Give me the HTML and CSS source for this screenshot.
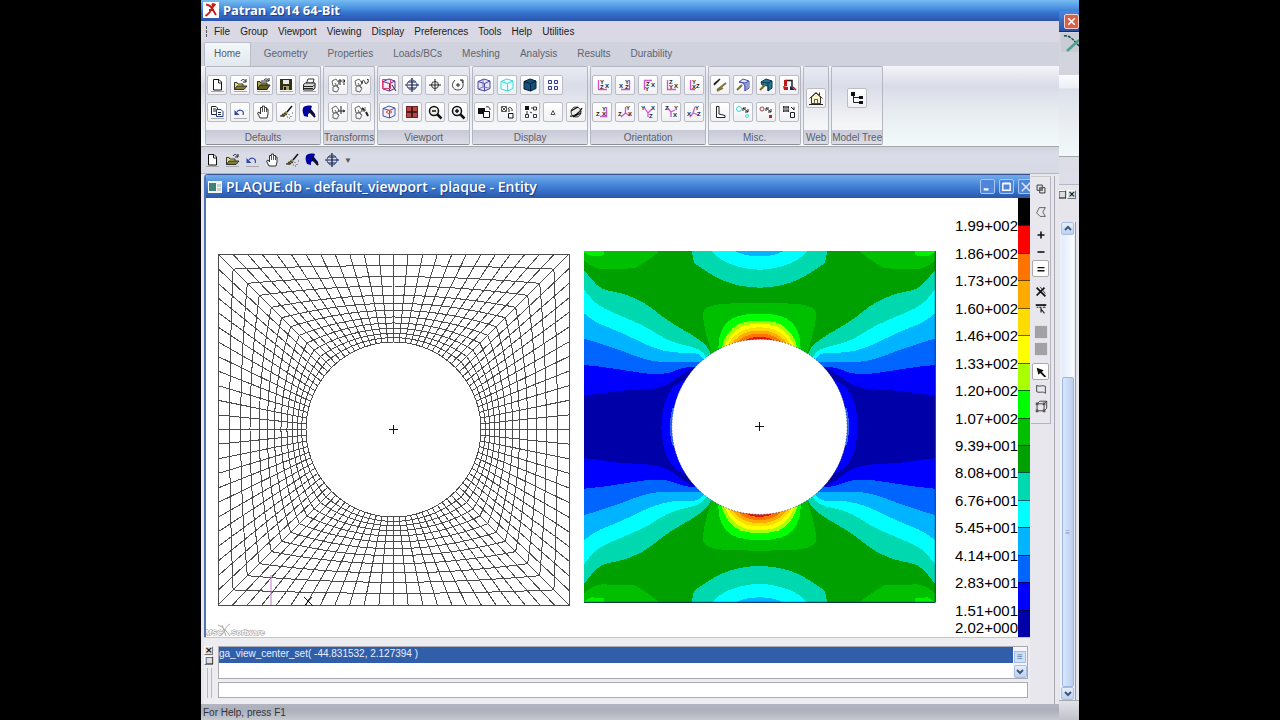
FILE: index.html
```
<!DOCTYPE html>
<html lang="en">
<head>
<meta charset="utf-8">
<title>Patran 2014 64-Bit</title>
<link rel="stylesheet" href="styles.css">
</head>
<body>
<div class="desktop">
  <div class="app">
    <header class="titlebar">
      <svg class="app-logo" viewBox="0 0 16 16" aria-hidden="true"><rect width="16" height="16" fill="#fff"/><path d="M3 2.500C6 3 9 5 10 8L13 13M12.500 2C10 4 9 6 8 8C7 11 5 12 2.500 14M6 8h5" fill="none" stroke="#c81818" stroke-width="1.800"/><circle cx="10" cy="2.500" r="1.500" fill="#c81818"/></svg>
      <h1>Patran 2014 64-Bit</h1>
    </header>
    <nav class="menubar" aria-label="Menu">
      <button>File</button><button>Group</button><button>Viewport</button><button>Viewing</button><button>Display</button><button>Preferences</button><button>Tools</button><button>Help</button><button>Utilities</button>
    </nav>
    <nav class="tabs" aria-label="Ribbon tabs">
      <button class="active">Home</button><button>Geometry</button><button>Properties</button><button>Loads/BCs</button><button>Meshing</button><button>Analysis</button><button>Results</button><button>Durability</button>
    </nav>
    <div class="ribbon" id="ribbon"></div>
    <div class="quick" id="quick"></div>
    <div class="work">
      <div class="left">
        <section class="doc">
          <div class="doc-title">
            <svg class="doc-icon" viewBox="0 0 14 12" aria-hidden="true"><rect width="14" height="12" fill="#f4f4f0"/><rect x="1" y="2" width="7" height="8" fill="#3f8478"/><path d="M9 3h4v3H9zM9 7h4v3H9z" fill="#c8d0d0"/></svg>
            <h2>PLAQUE.db - default_viewport - plaque - Entity</h2>
            <button class="win-btn" aria-label="Minimize"><svg viewBox="0 0 14 14"><path d="M3 10h5" stroke="#fff" stroke-width="2.500"/></svg></button>
            <button class="win-btn" aria-label="Maximize"><svg viewBox="0 0 14 14"><path d="M3 4h8v7H3zM3 3.500h8" fill="none" stroke="#fff" stroke-width="1.500"/></svg></button>
            <button class="win-btn cut" aria-label="Close"><svg viewBox="0 0 14 14"><path d="M3 3l9 9M12 3l-9 9" stroke="#dfe8fa" stroke-width="1.500"/></svg></button>
          </div>
          <div class="canvas">
            <svg class="plots" viewBox="206 198 740 439" preserveAspectRatio="xMinYMin meet">
              <defs>
                <g id="quarter">
                  <path fill="#00a000" d="M27 33H555V562H27Z"/>
                  <path fill="#00be00" d="M27 33H252C236 52 202 70 180 85L100 87C75 93 48 80 27 62Z"/>
                  <path fill="#00f000" d="M27 33H88V46L50 49L27 37Z"/>
                  <path fill="#00d8b0" d="M27 90C48 115 58 132 80 145C110 157 130 155 160 167C195 180 215 192 240 212C265 235 310 262 350 284C382 304 402 320 408 342L420 562H27Z"/>
                  <path fill="#00ffff" d="M27 148C45 170 55 188 85 204C130 226 185 245 225 268C265 295 290 308 330 316C360 322 385 330 394 352L420 562H27Z"/>
                  <path fill="#00b4ff" d="M27 220C50 238 65 250 100 262C145 280 180 298 215 314C250 330 290 340 330 338C360 336 375 340 386 358L420 562H27Z"/>
                  <path fill="#0064ff" d="M27 296C70 307 100 320 145 334C185 350 215 362 260 366C310 368 340 362 379 366L400 562H27Z"/>
                  <path fill="#0000ff" d="M27 375C90 380 140 390 195 398C235 404 275 404 300 392C320 384 340 378 365 380L400 562H27Z"/>
                  <path fill="#0000a8" d="M27 466C70 464 90 457 130 453C180 449 225 450 255 442C290 432 305 412 325 400C340 390 350 382 366 380L400 562H27Z"/>
                  <path fill="#0000ff" d="M259 562C260 515 268 475 288 450C303 430 320 424 334 418L400 562Z"/>
                  <path fill="#2866ff" d="M285 562C285 535 288 515 294 500L320 562Z"/>
                  <path fill="#00d8b0" d="M350 33C354 50 354 66 362 73C395 92 410 107 440 120C475 135 515 143 555 143V33Z"/>
                  <path fill="#00ffff" d="M411 33C425 50 440 62 468 73C500 84 525 89 555 89V33Z"/>
                  <path fill="#00b4ff" d="M480 33C500 44 525 49 555 49V33Z"/>
                  <path fill="#00be00" d="M412 345C400 305 384 260 384 225C384 198 415 192 480 190L555 189V330Z"/>
                  <path fill="#00ff00" d="M430 325C430 285 442 252 472 235C498 223 528 221 555 221V330Z"/>
                  <path fill="#aaff00" d="M440 322C448 288 468 262 497 249C516 243 536 242 555 242V330Z"/>
                  <path fill="#ffff00" d="M448 320C460 290 480 268 506 257C522 252 540 251 555 251V330Z"/>
                  <path fill="#ffdc00" d="M456 318C470 293 490 275 514 267C528 263 542 262 555 262V330Z"/>
                  <path fill="#ffaa00" d="M468 314C482 294 500 281 522 275C534 272 545 272 555 272V330Z"/>
                  <path fill="#ff7300" d="M486 308C500 293 515 286 530 283C540 281 548 281 555 281V330Z"/>
                  <path fill="#f01000" d="M508 303C520 295 532 291 555 290V330Z"/>
                </g>
              </defs>
              <g id="mesh" class="mesh"></g>
              <path class="axis" d="M271 575V605"/>
              <path class="cross" d="M389 429.500h9M393.500 425v9M304 597l9 9M312 597l-7 8"/>
              <g transform="translate(575 240) scale(.33333)">
                <g class="bands">
                  <use href="#quarter"/>
                  <use href="#quarter" transform="matrix(-1 0 0 1 1107 0)"/>
                  <use href="#quarter" transform="matrix(1 0 0 -1 0 1121)"/>
                  <use href="#quarter" transform="matrix(-1 0 0 -1 1107 1121)"/>
                </g>
                <circle cx="553.500" cy="560.500" r="263" fill="#fff"/>
                <circle cx="553.500" cy="560.500" r="263" class="rim"/>
                <path d="M1081 33V1087H27" fill="none" stroke="#102058" stroke-width="3"/>
              </g>
              <path class="cross" d="M755 426.500h9M759.500 422v9"/>
              <text class="msc" x="205" y="635">MSC</text>
              <text class="msc" x="231" y="635">Software</text>
              <path class="msc-x" d="M218 625c6 2 8 6 12 11M230 624c-6 3-4 9-11 12M222 625l4 11"/>
            </svg>
            <ol class="legend" id="legend"></ol>
          </div>
        </section>
        <section class="console">
          <div class="grip"><button aria-label="Close panel">×</button><button aria-label="Float panel">□</button><i></i></div>
          <div class="console-main">
            <div class="history">
              <ul><li>ga_view_center_set( -44.831532, 2.127394 )</li></ul>
              <div class="mini-scroll"><button class="thumb" aria-label="Scroll position">≡</button><button class="scroll-btn" aria-label="Scroll down"><svg viewBox="0 0 10 10"><path d="M2 3l3 3 3-3" fill="none" stroke="#405878" stroke-width="2"/></svg></button></div>
            </div>
            <input class="command" type="text" aria-label="Command">
          </div>
        </section>
      </div>
      <aside class="side"><div class="picker" id="picker"></div></aside>
    </div>
    <footer class="status">For Help, press F1</footer>
  </div>
  <div class="back">
    <div class="back-title"><button aria-label="Close"><svg viewBox="0 0 16 16"><path d="M4 4l8 8M12 4l-8 8" stroke="#fff" stroke-width="2"/></svg></button></div>
    <div class="back-menu"><svg viewBox="0 0 18 21"><rect width="18" height="19" fill="#c9ccd2"/><path d="M3 3C8 2 12 6 18 13" fill="none" stroke="#204858" stroke-width="1.500" stroke-dasharray="3 1"/><path d="M6 18L18 7" stroke="#48a090" stroke-width="2.500"/></svg></div>
    <div class="back-ribbon"></div>
    <div class="back-gap"></div>
    <div class="back-dock"><button aria-label="Float">□</button><button aria-label="Close panel">×</button></div>
    <div class="back-scroll">
      <button class="scroll-btn" aria-label="Scroll up"><svg viewBox="0 0 10 10"><path d="M2 6l3-3 3 3" fill="none" stroke="#405878" stroke-width="2"/></svg></button>
      <div class="track"><div class="handle">≡</div></div>
      <button class="scroll-btn" aria-label="Scroll down"><svg viewBox="0 0 10 10"><path d="M2 3l3 3 3-3" fill="none" stroke="#405878" stroke-width="2"/></svg></button>
    </div>
    <div class="back-status"></div>
  </div>
</div>
<script src="app.js"></script>
</body>
</html>
```

FILE: styles.css
```
* { box-sizing: border-box; }
body { margin: 0; background: #000; font-family: "Liberation Sans", sans-serif; font-size: 10px; color: #222; }
button { font: inherit; color: inherit; border: 0; padding: 0; margin: 0; background: none; }
h1, h2, ul, ol { margin: 0; padding: 0; list-style: none; }
svg { display: block; }
.desktop { position: relative; max-width: 878px; min-height: 100vh; margin: 0 auto; display: flex; }
.app { flex: 1; min-width: 0; display: flex; flex-direction: column; background: #d5d7e1; }

.titlebar { height: 21px; display: flex; align-items: center; gap: 4px; padding: 0 0 2px 2px; background: linear-gradient(#76bcf2, #4a90e0 40%, #3574cf 60%, #2c53ad); }
.app-logo { width: 16px; height: 16px; }
.titlebar h1, .doc-title h2 { font: bold 13px "Noto Sans", sans-serif; color: #fff; text-shadow: 1px 1px 1px #1c3c88; white-space: nowrap; }
.menubar { height: 21px; display: flex; align-items: center; gap: 10px; padding: 0 0 1px 13px; background: #d9d8e4; position: relative; color: #1c1c24; }
.menubar::before { content: ""; position: absolute; left: 5px; top: 5px; height: 11px; border-left: 1px dashed #555; }
.tabs { height: 24px; display: flex; padding-left: 3px; padding-right: 20px; background: #d0d2de; color: #60646f; }
.tabs button { padding: 0 10px 2px; }
.tabs .active { padding: 0 9px 2px; margin: 0 3px 0 0; background: linear-gradient(#f3f7fa, #e1e9ef); border: 1px solid #b9bdca; border-bottom: 0; border-radius: 2px 2px 0 0; color: #555a66; }

.ribbon { height: 81px; display: flex; gap: 2px; margin-right: 20px; padding: 0 4px; background: linear-gradient(#f4f5fa, #d9dce7 25%, #e6ebf0 55%, #f2fafa); border-bottom: 1px solid #a5a6ac; }
.group { display: flex; flex-direction: column; border: 1px solid #b3b6c0; border-bottom-color: #8e9099; border-radius: 2px; background: linear-gradient(#e9ebf2, #d9dde8 25%, #e7e9ef 50%, #f4f6f8 75%); margin-bottom: 1px; }
.tools { flex: 1; display: grid; gap: 7px 3px; padding: 0 1px 1px; place-content: center; }
.c5 { grid-template-columns: repeat(5, 20px); }
.c4 { grid-template-columns: repeat(4, 20px); }
.c2 { grid-template-columns: repeat(2, 20px); }
.c1 { grid-template-columns: 20px; padding: 0 2px 1px; }
.tools button { width: 20px; height: 20px; display: grid; place-items: center; border: 1px solid #bcbdc4; border-radius: 2px; background: linear-gradient(#fff, #f1f1f4); }
.icon { width: 16px; height: 16px; }
.group h3 { margin: 0; height: 14px; font-size: 10px; line-height: 16px; font-weight: normal; text-align: center; white-space: nowrap; color: #5c606c; background: linear-gradient(#c7c9d7, #dcdde5); }

.quick { height: 27px; display: flex; gap: 4px; align-items: center; padding-left: 3px; background: linear-gradient(#d0d2dc, #dadde8 30%, #d6dae5); border-bottom: 1px solid #b4b6c0; }
.quick .caret { align-self: center; color: #555; font-size: 8px; }

.work { flex: 1; display: flex; margin-right: 20px; min-height: 0; background: #e9e7ee; }
.left { flex: 1; min-width: 0; display: flex; flex-direction: column; padding-left: 3px; }
.doc { flex: 1; display: flex; flex-direction: column; border-left: 2px solid #5272b4; border-top: 1px solid #34508c; border-radius: 4px 0 0 0; overflow: hidden; background: #fff; }
.doc-title { height: 23px; display: flex; align-items: center; background: linear-gradient(#74abec, #4485d8 45%, #3067bf 80%, #2f56a4); padding-left: 2px; }
.doc-icon { width: 14px; height: 12px; margin-right: 4px; }
.doc-title h2 { flex: 1; font: 600 14px "Open Sans", sans-serif; line-height: 20px; }
.win-btn { width: 15px; height: 15px; margin-left: 4px; border: 1px solid #aac6f3; border-radius: 2px; background: #4f86dc; }
.win-btn.cut { width: 12px; border-right: 0; border-radius: 2px 0 0 2px; overflow: hidden; }
.win-btn svg { width: 13px; height: 13px; }
.canvas { flex: 1; display: flex; justify-content: space-between; }
.plots { width: 740px; height: 439px; flex: 0 0 auto; }
.mesh { fill: none; stroke: #4c4c4c; stroke-width: 1px; shape-rendering: crispEdges; }
.bands { shape-rendering: crispEdges; }
.cross { fill: none; stroke: #111; }
.axis { stroke: #c878d8; }
.rim { fill: none; stroke: #203060; stroke-width: 2px; stroke-dasharray: 4 5; }
.msc { font: italic bold 8px "Liberation Sans", sans-serif; fill: #fff; stroke: #999; stroke-width: 1px; paint-order: stroke; }
.msc-x { fill: none; stroke: #aaa; }
.legend { display: flex; flex-direction: column; height: 439px; font: 15px "Liberation Sans", sans-serif; color: #000; }
.legend li { flex: 1; display: flex; align-items: flex-end; justify-content: flex-end; }
.legend span { line-height: 16px; margin-bottom: -9px; }
.legend li:last-child span { margin-bottom: 1px; }
.legend i { align-self: stretch; width: 12px; border-top: 1px solid rgba(0, 0, 0, .6); }

.console { height: 67px; display: flex; gap: 5px; padding: 8px 2px 6px 0; background: #ececf1; border-top: 1px solid #c4c4cc; }
.grip { width: 9px; display: flex; flex-direction: column; gap: 1px; }
.grip button, .back-dock button { width: 9px; height: 9px; font: bold 9px "DejaVu Sans", sans-serif; line-height: 7px; border: 1px solid #888; border-color: #fff #777 #777 #fff; background: #ddd; color: #111; }
.grip i { flex: 1; width: 5px; margin: 2px 0 0 3px; border: 1px solid #b8b8c0; border-width: 0 1px; }
.console-main { flex: 1; display: flex; flex-direction: column; gap: 3px; }
.history { height: 34px; display: flex; background: #fff; border: 1px solid #a9a9b2; }
.history ul { flex: 1; }
.history li { height: 16px; line-height: 14px; background: #315ea8; color: #e8f0ff; font-size: 10px; }
.mini-scroll { width: 14px; display: flex; flex-direction: column; justify-content: space-between; align-items: center; background: #f3f5fa; padding-top: 4px; }
.thumb { width: 12px; height: 12px; line-height: 10px; border: 1px solid #a5bde6; background: #cfdffa; color: #6680a8; }
.scroll-btn { width: 13px; height: 13px; border: 1px solid #a9bfe2; border-radius: 2px; background: linear-gradient(#e6effd, #bcd0f2); display: grid; place-items: center; }
.scroll-btn svg { width: 10px; height: 10px; }
.command { height: 16px; width: 100%; border: 1px solid #a9a9b2; padding: 0 2px; background: #fff; font: 10px "Liberation Sans", sans-serif; }

.side { width: 29px; padding: 2px 4px 0 1px; background: #e9e7ee; display: flex; align-items: flex-start; gap: 3px; }
.side::after { content: ""; align-self: stretch; border-left: 1px solid #aaaab4; }
.picker { width: 20px; height: 248px; display: flex; flex-direction: column; align-items: center; padding-top: 3px; border: 1px solid #b4b4be; border-top-color: #ccc; border-left: 0; }
.picker button { width: 17px; height: 17px; display: grid; place-items: center; }
.picker .gap { margin-bottom: 6px; }
.picker .on { background: #fff; border: 1px solid #aaa; border-radius: 2px; }
.picker .icon { width: 14px; height: 14px; }

.status { height: 16px; line-height: 17px; padding-left: 2px; color: #30343c; background: linear-gradient(#b2b5c0, #acb0bb 40%, #c6c9d0); }

.back { position: absolute; right: 0; top: 11px; bottom: 0; width: 20px; display: flex; flex-direction: column; background: #e6e5ec; overflow: hidden; }
.back-title { height: 21px; background: linear-gradient(#4a86dc, #2a50a8); padding: 3px 0 0 5px; border-bottom: 1px solid #15306e; }
.back-title button { width: 15px; height: 15px; border: 1px solid #f2d0c8; border-radius: 2px; background: #d4624a; }
.back-menu { height: 43px; background: #d3d5de; padding: 1px 0 0 2px; }
.back-menu svg { width: 18px; height: 21px; }
.back-ribbon { height: 82px; background: linear-gradient(#fbfcfe, #eceff5 16%, #dce0ea 17%, #e8ecf1 55%, #f2f9fa); border-bottom: 1px solid #a5a6ac; }
.back-gap { height: 28px; background: linear-gradient(#dcdde4, #dcdeea); border-bottom: 1px solid #b4b6c0; }
.back-dock { height: 37px; padding-top: 5px; display: flex; justify-content: flex-end; gap: 1px; padding-right: 3px; }
.back-scroll { flex: 1; margin: 0 3px 0 1px; border-right: 1px solid #8f98ac; display: flex; flex-direction: column; align-items: center; background: #edf1fa; }
.track { flex: 1; width: 12px; display: flex; flex-direction: column; background: linear-gradient(90deg, #e4ecfa, #fafcff); }
.handle { margin-top: 142px; flex: 1; display: grid; place-items: center; border: 1px solid #9cb6e0; border-radius: 2px; background: linear-gradient(90deg, #dae7fd, #bccff0); color: #8098c0; font-size: 8px; }
.back-status { height: 20px; border-top: 1px solid #aaa; background: linear-gradient(#e2e3e8, #c0c3cb); }
```

FILE: app.js
```
const SVG_NS = 'http://www.w3.org/2000/svg';

const line = (d, color = '#222', width = 1) =>
  `<path d="${d}" fill="none" stroke="${color}" stroke-width="${width}"/>`;
const fill = (d, color = '#111') => `<path d="${d}" fill="${color}"/>`;
const base = line('M2 14.500h13', '#aaa');
const cube = (edge, face) =>
  `<path d="M2 4.500L8 2l6 2v7.500L8.500 14 2 12Z" fill="${face}" stroke="${edge}"/>` + line('M2 4.500L8.500 6.500 14 4M8.500 6.500V14', edge);
const small = (x, y, letter) => `<text x="${x}" y="${y}" font-family="Liberation Sans" font-size="6" font-weight="bold" fill="#222">${letter}</text>`;
const gears = line('M2 4l4-2 3 4-2 3-4 0zM3 10l3-2 3 3-2 4-4-1zM5 6l3 5', '#666');
const scissors = fill('M2 4C3 2 6 1 11 2L10 5 14 10 14 13 9 9 7 10 7 13 3 12C2 9 1 7 2 4Z', '#0000a0') + line('M8 6l6 7', '#111', 2);
const axes = (d, a, b, c) => line(d, '#cc55cc', 1.300) + small(a[0], a[1], a[2]) + small(b[0], b[1], b[2]) + small(c[0], c[1], c[2]);

const icons = {
  new: `<path d="M4.500 2.500H10L12.500 5V13H4.500Z" fill="#fff" stroke="#111"/>` + line('M9.500 3v3h3') + base,
  open: `<path d="M2.500 12.500V5.500H5L6 7H11V12.500Z" fill="#e9e06c" stroke="#333"/><path d="M2.500 12.500L5 9H15L12 12.500Z" fill="#80802c" stroke="#333"/>` + line('M9 4c2-3 4-1 5 1M14 2v3h-3') + base,
  openAll: `<path d="M2.500 12.500V4.500H5L6 6H12V12.500Z" fill="#b5ab43" stroke="#222"/><path d="M2.500 12.500L5 8H15L12 12.500ZM6 4h6" fill="#60601c" stroke="#222"/>` + line('M9 3c2-2 4-1 5 1M14 1v3h-3') + base,
  save: fill('M2 2H14V13H2Z', '#333018') + fill('M5 3H11V7H5Z', '#e8e8e8') + fill('M5 9H11V13H5Z', '#a0a060') + fill('M6 10H8V13H6Z') + base,
  print: `<path d="M5.500 6L7 2H13L12 6Z" fill="#fff" stroke="#333"/><path d="M2.500 7.500L4.500 6H14V11L12 13H2.500Z" fill="#d5d5d5" stroke="#222"/>` + line('M2.500 9.500H12L14 7.500M3 11.500h9') + base,
  copy: `<path d="M2.500 2.500H7L8.500 4V10.500H2.500Z" fill="#fff" stroke="#222"/><path d="M7.500 5.500H12L14 7.500V12.500H7.500Z" fill="#fff" stroke="#204080"/>` + line('M4 5h3M4 7h3M9 8.500h3M9 10.500h3') + base,
  undo: line('M5 8C7 5 13 6 11 11', '#3444a0', 1.200) + fill('M2.500 6v5h5Z', '#3444a0') + base,
  hand: `<path d="M5 14L2.500 9 4 8l1.500 2V3.500h2V2h2v1.500h2V5h1.500V10L12 14Z" fill="#fff" stroke="#333"/>` + line('M7.500 3.500V8M9.500 3V8M11.500 5V8', '#555'),
  broom: line('M14 2L9 8', '#111', 1.500) + fill('M8 7L2 12 6 13 10 9Z', '#8c8a50') + line('M2 12h4M4 10l3 2M6 9l3 2', '#222') + line('M11 10v1M13 12v1M11 14h1M14 9h1M9 13h1', '#555'),
  cut: scissors,
  t1: gears + line('M9 3h2v2H9zM12.500 3h2v2h-2M9 7h2M13 7h2'),
  t2: gears + line('M9 6c0-4 3-3 3 0 2 2 4-1 3-4M14 2l1 1M9 7V4'),
  t3: gears + line('M11 2v8M8 7h6M13 6l2 1-2 1'),
  t4: gears + line('M9 4l3 3M13 8l2 4', '#222', 2) + line('M12 3v4H8', '#777'),
  v1: cube('#56348c', '#eee') + line('M1.500 2.500H9.500V11.500H1.500Z', '#e03878') + line('M11 8l4 6', '#223'),
  v2: `<circle cx="8" cy="8" r="5" fill="none" stroke="#244888" stroke-dasharray="3 1"/>` + line('M1 8h14M8 1v14M4 5h8M4 11h8', '#101848', 1.200),
  v3: `<circle cx="8" cy="8" r="3.500" fill="none" stroke="#333"/>` + line('M2 8h12M8 2v12'),
  v4: line('M5 3C0 8 3 13 8 13S15 7 11 3', '#444') + line('M8 6v4M6 8h4M10 3h3v3'),
  v5: cube('#4858a0', '#eef') + line('M8 6l3 2-3 2-3-2z', '#e05030'),
  v6: fill('M2 2H14V14H2Z', '#b84444') + line('M8 2V14M2 8H14', '#2c1010', 1.500) + line('M2.500 2.500H13.500V13.500H2.500Z', '#702020'),
  zoomOut: `<circle cx="7" cy="7" r="4.500" fill="#eee" stroke="#111" stroke-width="1.500"/>` + line('M10 10l4.500 4.500', '#111', 2.500) + line('M5 7h4', '#111', 1.500),
  zoomIn: `<circle cx="7" cy="7" r="4.500" fill="#eee" stroke="#111" stroke-width="1.500"/>` + line('M10 10l4.500 4.500', '#111', 2.500) + line('M5 7h4M7 5v4', '#111', 1.500),
  d1: cube('#4444a0', '#e4e4f8') + line('M2 12l5-2 6 1M7 3v7', '#7777c0'),
  d2: cube('#38d8d8', '#e8ffff'),
  d3: cube('#08203c', '#155078'),
  d4: line('M3.500 3.500h3v3h-3zM9.500 3.500h3v3h-3zM3.500 9.500h3v3h-3zM9.500 9.500h3v3h-3z', '#303890'),
  d5: fill('M2 4H9V10H2Z') + `<path d="M7.500 7.500H13.500V13.500H7.500Z" fill="#fff" stroke="#111"/>` + line('M10 3c3-1 4 1 4 3'),
  d6: line('M2.500 2.500h5v5h-5zM3 3l4 4M7 3L3 7', '#555') + `<path d="M9.500 9.500H14V14H9.500Z" fill="#fff" stroke="#111"/>` + line('M9 5c1-3 5-1 4 2M10 5v3'),
  d7: fill('M3 2H7V6H3Z') + line('M9 4h2M11.500 3h3v3h-3zM3.500 10.500h3v3h-3zM11.500 10.500h3v3h-3zM5 7v3M8 8l2 1', '#333'),
  d8: line('M6 10.500L8 6.500 10 10.500Z', '#555'),
  d9: `<circle cx="8" cy="8" r="5" fill="#eee" stroke="#333"/>` + line('M2 12c3 1 10-3 12-8M3 7l7-4M5 13l8-4', '#111', 1.200),
  o1: axes('M4.500 3V12.500H13', [6, 7, 'Y'], [6, 12, 'Z'], [11, 11, 'X']),
  o2: axes('M12.500 3V12.500H4', [8, 7, 'Y'], [2, 11, 'X'], [8, 12, 'Z']),
  o3: axes('M4.500 13V3.500H12', [6, 9, 'Z'], [5, 14, 'Y'], [11, 10, 'X']),
  o4: axes('M4.500 3V12.500H13', [6, 7, 'Z'], [6, 12, 'Y'], [11, 11, 'X']),
  o5: axes('M4.500 3V12.500H9', [6, 7, 'Y'], [6, 12, 'X'], [10, 11, 'Z']),
  o6: axes('M12.500 3V12.500H6', [8, 7, 'Y'], [2, 12, 'Z'], [8, 12, 'X']),
  o7: axes('M8.500 3V9L4 13M8.500 9L13 12', [9, 6, 'Y'], [1, 12, 'Z'], [11, 12, 'X']),
  o8: axes('M4 3L8 9L12 5M8 9V13', [1, 6, 'Y'], [11, 6, 'X'], [9, 14, 'Z']),
  o9: axes('M4 3L8 8V13M8 8L12 6', [2, 6, 'Z'], [11, 6, 'Y'], [10, 13, 'X']),
  o10: axes('M9 3L7 9L4 13M7 9L13 11', [9, 6, 'Y'], [1, 12, 'X'], [11, 12, 'Z']),
  m1: line('M2 7l6-5M2 8l5-5', '#222', 1.500) + line('M5 13L14 6M5 14l6-3', '#77743c', 1.800),
  m2: `<path d="M4 5L8 2l6 2v7L10 14V9L8 6Z" fill="#dfe4fa" stroke="#4850a8"/>` + line('M4 5l6 1 4-2M10 6v8M12 5v7', '#4850a8') + line('M2 13l5-5', '#776f28', 2),
  m3: `<path d="M3 5L8 2l6 2v7L10 14V9L4 8Z" fill="#1c7898" stroke="#103850"/>` + line('M3 5l7 1 4-2M10 6v8', '#103850') + line('M2 13l5-5', '#776f28', 2),
  m4: line('M4 3.500h7v8', '#222', 1.500) + fill('M3 3h3v6H3Z', '#c01818') + fill('M2 9l5 1v3H3Z', '#c01818') + fill('M9 9l5 4H9Z', '#202060') + line('M12 10l3 3', '#c01818', 1.500),
  m5: `<path d="M4.500 2.500H7V10L13 11.500V13.500H4.500Z" fill="#fff" stroke="#222"/>`,
  m6: `<circle cx="4" cy="5" r="2.500" fill="none" stroke="#40d8d8"/><circle cx="12" cy="12" r="1.500" fill="none" stroke="#40d8d8"/>` + line('M8 4l5 4M8 7V4h3M13 5v3h-3'),
  m7: `<circle cx="4" cy="5" r="2" fill="none" stroke="#a04040"/>` + line('M8 4l5 4M8 7V4h3M13 5v3h-3') + fill('M11 11h3v3h-3Z', '#c02020'),
  m8: fill('M2 2H8V8H2Z', '#333') + line('M4 2v6M6 2v6M2 5h6', '#ddd', .7) + line('M10 3l3 3M9.500 8.500h4v5h-4zM13 3v3'),
  web: `<path d="M3.500 7V13.500H12.500V7L8 3Z" fill="#fbf5c8" stroke="#333"/>` + line('M1.500 8.500L8 2.500 14.500 8.500M11.500 5V2.500', '#333') + `<path d="M6.500 9.500h3V13.500h-3Z" fill="#fff" stroke="#555"/>` + line('M1 14.500h14'),
  tree: fill('M2 2H6V6H2ZM10 6H14V9H10ZM10 11H14V14H10Z') + line('M4.500 6V12.500H10M4.500 7.500H10'),
  p1: line('M3.500 3.500h6v6h-6zM6.500 6.500h6v6h-6z') + fill('M6 6h4v4H6z', '#777'),
  p2: line('M6 3h7L10 8l3 5H7L3 9Z', '#555'),
  plus: line('M4 8h8M8 4v8', '#111', 1.800),
  minus: line('M4 8h8', '#111', 1.800),
  equals: line('M4 6.500h8M4 10h8', '#111', 1.500),
  p3: line('M3 3l10 10M3 12L12 3', '#111', 2) + line('M7 2l6 8', '#333'),
  p4: line('M2 3.500h12', '#111', 2) + line('M3 6h2M6 6h2M8 6v6M10 6h3M8 8l4 5', '#222', 1.300),
  block: fill('M1 1H15V15H1Z', '#a2a2a6'),
  pointer: fill('M3 3L11 6 9 8 14 13 12 14 7 9 5 11Z'),
  p5: line('M3 4c4 2 7-1 10 1v8c-3-3-6 0-10-2z', '#333'),
  p6: line('M3.500 5.500h8v8h-8zM3.500 5.500l3-3h8v8l-3 3M11.500 5.500l3-3', '#333') + fill('M2 4h3v3H2zM2 12h3v3H2zM10 12h3v3h-3zM10 4h3v3h-3z', '#555'),
};

const icon = (name) => `<svg class="icon" viewBox="0 0 16 16" aria-hidden="true">${icons[name]}</svg>`;
const button = (name, cls = '') => `<button class="${cls}" aria-label="${name}">${icon(name)}</button>`;

const groups = [
  ['Defaults', 5, 'new open openAll save print copy undo hand broom cut'],
  ['Transforms', 2, 't1 t2 t3 t4'],
  ['Viewport', 4, 'v1 v2 v3 v4 v5 v6 zoomOut zoomIn'],
  ['Display', 5, 'd1 d2 d3 d4 - d5 d6 d7 d8 d9'],
  ['Orientation', 5, 'o1 o2 o3 o4 o5 o6 o7 o8 o9 o10'],
  ['Misc.', 4, 'm1 m2 m3 m4 m5 m6 m7 m8'],
  ['Web', 1, 'web'],
  ['Model Tree', 1, 'tree'],
];
document.getElementById('ribbon').innerHTML = groups.map(([label, cols, names]) =>
  `<section class="group"><div class="tools c${cols}">${names.split(' ').map((n) => n === '-' ? '<span></span>' : button(n)).join('')}</div><h3>${label}</h3></section>`).join('');

document.getElementById('quick').innerHTML =
  ['new', 'open', 'undo', 'hand', 'broom', 'cut', 'v2'].map((n) => button(n)).join('') + '<button class="caret" aria-label="Customize">▼</button>';

document.getElementById('picker').innerHTML = [
  ['p1', 'gap'], ['p2', 'gap'], ['plus'], ['minus'], ['equals', 'on gap'], ['p3'], ['p4', 'gap'],
  ['block'], ['block', 'gap'], ['pointer', 'on'], ['p5'], ['p6'],
].map(([n, cls]) => button(n, cls)).join('');

const legend = [
  ['1.99+002', '#000000'], ['1.86+002', '#ff0000'], ['1.73+002', '#ff7300'], ['1.60+002', '#ffaa00'],
  ['1.46+002', '#ffdc00'], ['1.33+002', '#ffff00'], ['1.20+002', '#aaff00'], ['1.07+002', '#00ff00'],
  ['9.39+001', '#00be00'], ['8.08+001', '#00a000'], ['6.76+001', '#00d8b0'], ['5.45+001', '#00ffff'],
  ['4.14+001', '#00b4ff'], ['2.83+001', '#0064ff'], ['1.51+001', '#0000ff'], ['2.02+000', '#0000a8'],
];
document.getElementById('legend').innerHTML = legend.map(([value, color]) =>
  `<li><span>${value}</span><i style="background-color:${color}"></i></li>`).join('');

// Plate with a hole: each node lies between the hole's rim and the plate's edge.
const centre = { x: 393.5, y: 429.5 };
const half = 175.5;
const radius = 87.5;
const rings = [0, 13, 26, 41, 57, 75, 95, 116, 140, 168, 196, 229, 264].map((v) => v / 264);
const perSide = 24;

function node(k, t) {
  const side = Math.floor(k / perSide) % 4;
  const u = (k % perSide) / perSide;
  const angle = (side * 90 - 135 + u * 90) * Math.PI / 180;
  const edge = [[-1 + 2 * u, -1], [1, -1 + 2 * u], [1 - 2 * u, 1], [-1, 1 - 2 * u]][side];
  const x = centre.x + (1 - t) * radius * Math.cos(angle) + t * half * edge[0];
  const y = centre.y + (1 - t) * radius * Math.sin(angle) + t * half * edge[1];
  return x.toFixed(1) + ' ' + y.toFixed(1);
}

let d = '';
for (let k = 0; k < perSide * 4; k++) d += `M${node(k, 0)}L${node(k, 1)}`;
rings.forEach((t) => {
  for (let k = 0; k < perSide * 4; k++) d += (k ? 'L' : 'M') + node(k, t);
  d += 'Z';
});
const mesh = document.createElementNS(SVG_NS, 'path');
mesh.setAttribute('d', d);
document.getElementById('mesh').append(mesh);
```
